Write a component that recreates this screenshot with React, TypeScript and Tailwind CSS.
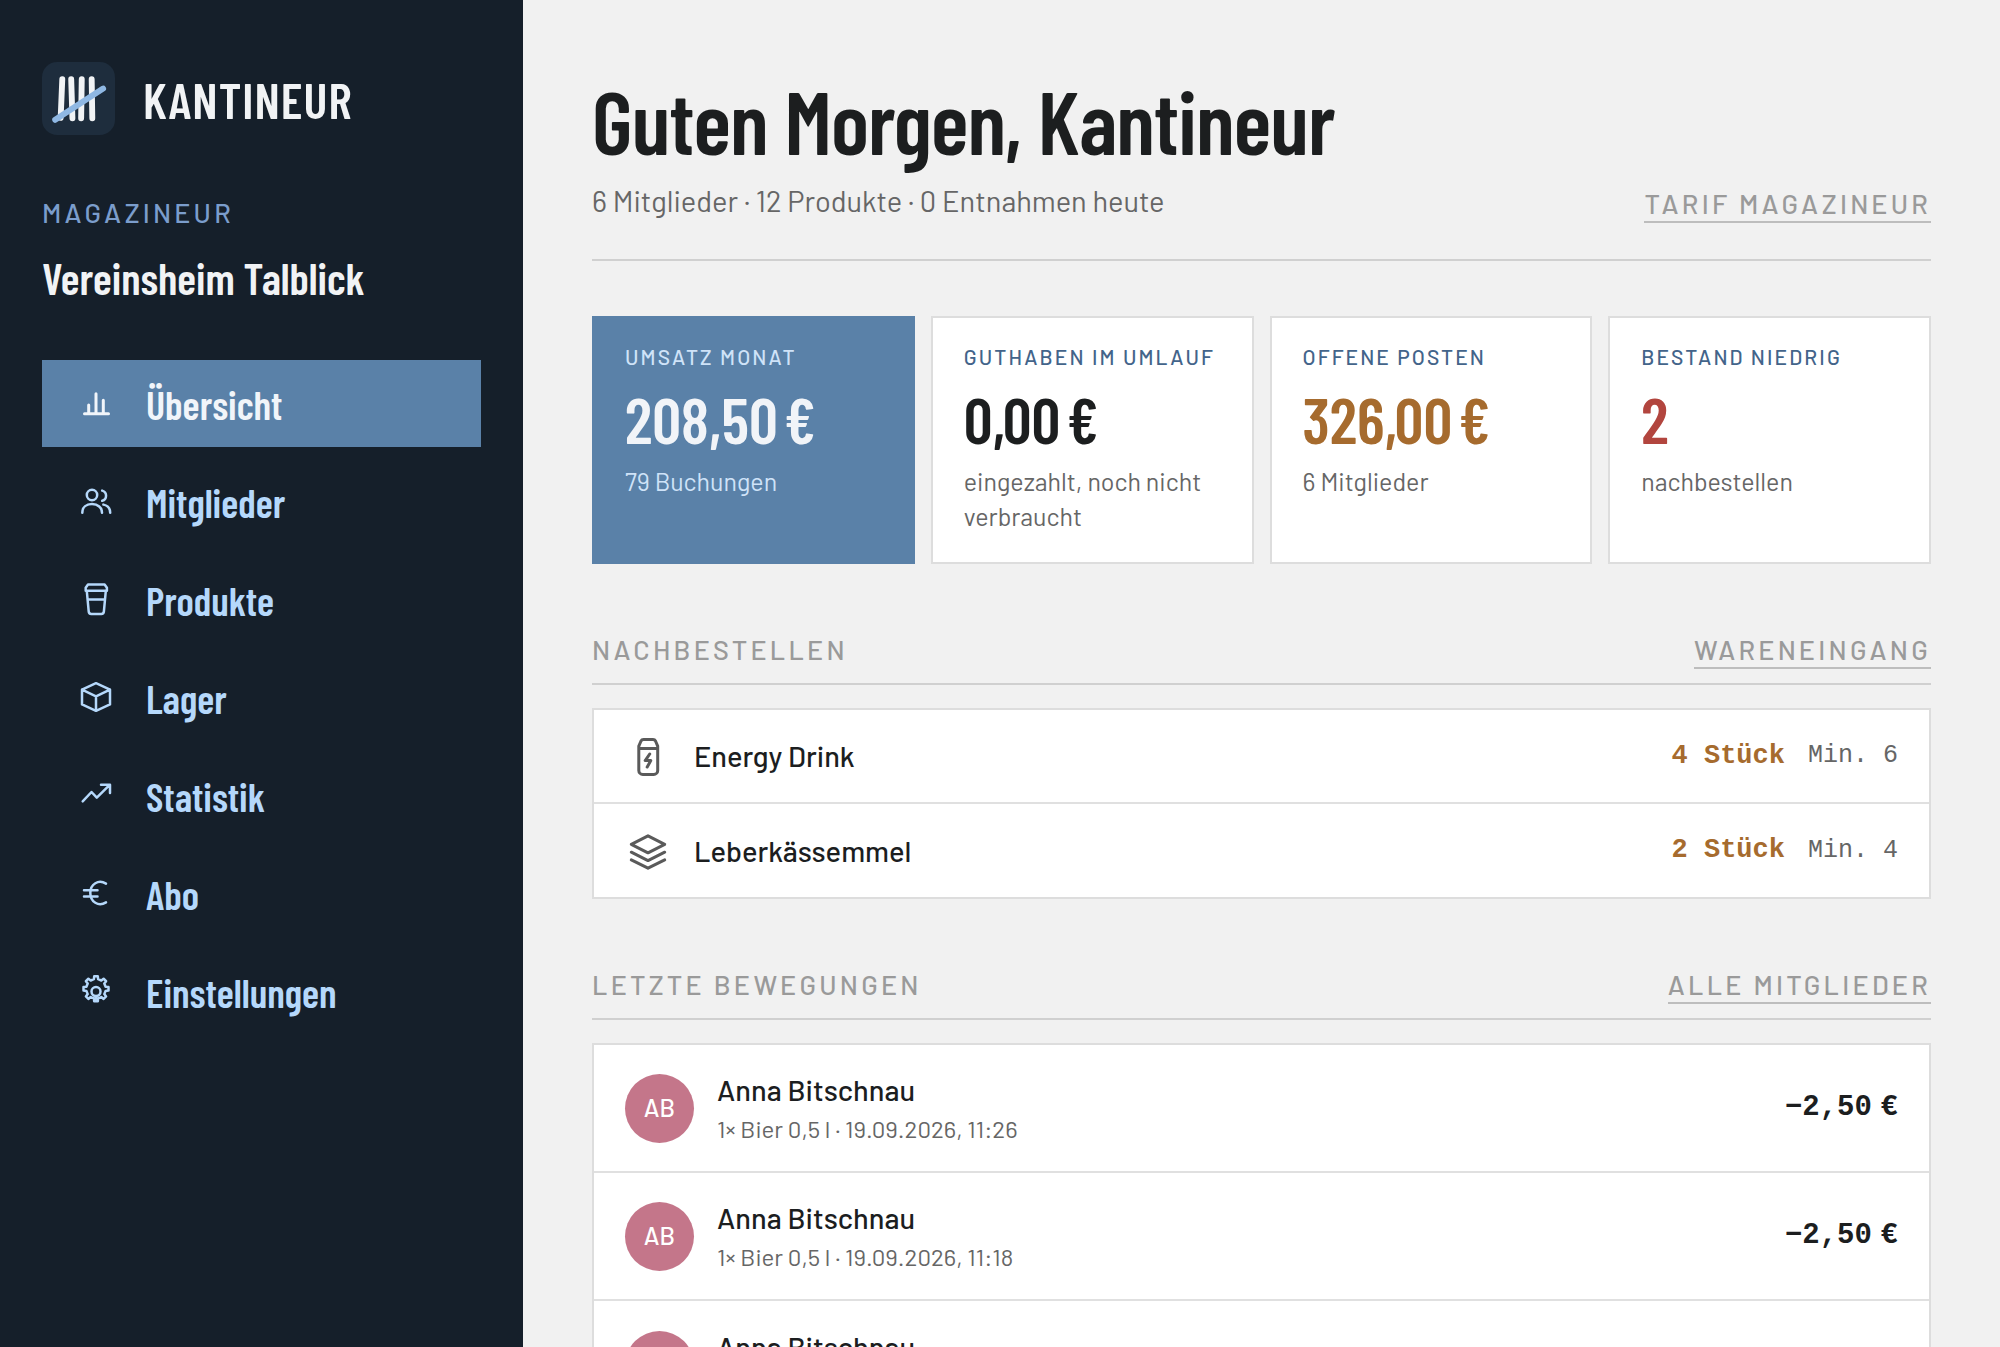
import React from 'react'
import clsx from 'clsx'

const condensed = "font-['Barlow_Condensed','Roboto_Condensed','Liberation_Sans_Narrow','Roboto',sans-serif]"
const sans = "font-['Barlow','Roboto',sans-serif]"
const mono = "font-['Liberation_Mono',monospace]"

// gear outline with eight teeth, centred on cx/cy
function gearPath(cx: number, cy: number, outer: number, inner: number) {
  const points: string[] = []
  for (let i = 0; i < 8; i++) {
    const mid = (i * Math.PI) / 4 - Math.PI / 2
    const corners = [
      [inner, -0.22],
      [outer, -0.14],
      [outer, 0.14],
      [inner, 0.22],
    ]
    corners.forEach(([r, a]) => {
      points.push(`${(cx + r * Math.cos(mid + a)).toFixed(1)} ${(cy + r * Math.sin(mid + a)).toFixed(1)}`)
    })
  }
  return `M${points.join('L')}Z`
}

const navItems = [
  {
    label: 'Übersicht',
    icon: <path d="M6.5 28.7h24M10.7 28.5v-8.5M18 28.5V8.7M25.3 28.5V15.2" strokeWidth="3" />,
  },
  {
    label: 'Mitglieder',
    icon: (
      <>
        <circle cx="14" cy="12" r="5.2" />
        <path d="M4.3 29.7c0-5.2 3.8-8.6 9.7-8.6s10 3.4 10 8.6M24.2 7.6a5.3 5.3 0 0 1 0 10.2M25.4 21.6c4.4.9 6.8 3.8 6.8 8.1" />
      </>
    ),
  },
  {
    label: 'Produkte',
    icon: <path d="M10 3.6h16.6l2.3 3.2v2.9H7.7V6.8zM8.8 10l1.9 20.4a2.6 2.6 0 0 0 2.6 2.5h10a2.6 2.6 0 0 0 2.6-2.5L27.8 10M9.8 18.4h17" />,
  },
  {
    label: 'Lager',
    icon: <path d="M18 4.2l14 6.4v14.8l-14 6.4-14-6.4V10.6zM4 10.6l14 6.8 14-6.8M18 17.4v14.4" />,
  },
  {
    label: 'Statistik',
    icon: <path d="M4.7 24.3l8.8-9.3 5.3 5.7L31.7 7.8M23 7.7h9v8.3" />,
  },
  {
    label: 'Abo',
    icon: <path d="M28 8.6C20.5 4 12.3 9 12.3 18S20.5 32 28 27.4M6 15.2h13.5M6 21.4h13.5" />,
  },
  {
    label: 'Einstellungen',
    icon: (
      <>
        <path d={gearPath(18, 15.8, 12.6, 9.8)} />
        <circle cx="18" cy="18.6" r="4.5" />
        <path d="M16.8 23.4l1.2 3.4 1.2-3.4" strokeWidth="1.8" />
      </>
    ),
  },
]

const stats = [
  { label: 'Umsatz Monat', value: '208,50\u202f€', note: '79 Buchungen', color: 'text-[#f1f4f8]', active: true },
  { label: 'Guthaben im Umlauf', value: '0,00\u202f€', note: 'eingezahlt, noch nicht verbraucht', color: 'text-[#1c1e1f]' },
  { label: 'Offene Posten', value: '326,00\u202f€', note: '6 Mitglieder', color: 'text-[#a66b2e]' },
  { label: 'Bestand niedrig', value: '2', note: 'nachbestellen', color: 'text-[#b2453e]' },
]

const reorders = [
  {
    name: 'Energy Drink',
    stock: '4 Stück',
    min: 'Min. 6',
    icon: (
      <>
        <path d="M18.5 6.5H28c1.2 0 2 .5 2.5 1.5l2.2 5.2v24.2a4 4 0 0 1-4 4H17.8a4 4 0 0 1-4-4V13.2L16 8c.5-1 1.3-1.5 2.5-1.5zM13.8 15.5h18.9" />
        <path d="M24.7 21l-4.5 6.6h5.6L22.2 34" />
      </>
    ),
  },
  {
    name: 'Leberkässemmel',
    stock: '2 Stück',
    min: 'Min. 4',
    icon: <path d="M23 7.8l16.7 8.5L23 24.8 6.3 16.3zM6.3 24.2L23 32.6l16.7-8.4M6.3 31.8L23 40.2l16.7-8.4" />,
  },
]

const movements = [
  { name: 'Anna Bitschnau', initials: 'AB', detail: '1× Bier 0,5 l · 19.09.2026, 11:26', amount: '−2,50\u202f€' },
  { name: 'Anna Bitschnau', initials: 'AB', detail: '1× Bier 0,5 l · 19.09.2026, 11:18', amount: '−2,50\u202f€' },
  { name: 'Anna Bitschnau', initials: 'AB', detail: '1× Bier 0,5 l · 19.09.2026, 11:12', amount: '−2,50\u202f€' },
]

function Logo() {
  return (
    <svg className="size-[73px] shrink-0" viewBox="0 0 72 72" fill="none" strokeLinecap="round" aria-hidden="true">
      <rect width="72" height="72" rx="15" fill="#1e2d3d" />
      <g stroke="#f1f3f5" strokeWidth="5.8">
        <path d="M20 17L18.4 55M28.8 17l1.2 38.5M39.200 17l-.6 38.500M49 17l.6 38.500" />
      </g>
      <path d="M13 57L60.300 26.200" stroke="#8fb8e4" strokeWidth="5.800" />
    </svg>
  )
}

function TextLink({ children }: { children: React.ReactNode }) {
  return (
    <a href="#" className="border-b-2 border-[#bdbdbd] pb-[2px] text-[27px] leading-[31px] font-medium tracking-[0.12em] text-[#9a9a9a] uppercase">
      {children}
    </a>
  )
}

function SectionHead({ title, link }: { title: string; link: string }) {
  return (
    <div className="mb-[23px] flex items-start justify-between border-b-2 border-[#d0d0d0] pb-[14px]">
      <h2 className="text-[27px] leading-[31px] font-medium tracking-[0.12em] text-[#9a9a9a] uppercase">{title}</h2>
      <TextLink>{link}</TextLink>
    </div>
  )
}

function Sidebar() {
  return (
    <aside className="w-[523px] shrink-0 bg-[#151f2a] px-[42px] pt-[62px]">
      <div className="flex items-center gap-7">
        <Logo />
        <span className={clsx(condensed, 'text-[50px] leading-[72px] font-semibold tracking-[1px] text-[#f1f3f5]')}>KANTINEUR</span>
      </div>
      <div className="mt-[61px] text-[27px] leading-8 font-medium tracking-[0.12em] text-[#7b9dcc] uppercase">Magazineur</div>
      <div className={clsx(condensed, 'mt-6 text-[44px] leading-[52px] font-semibold text-[#f1f3f5]')}>Vereinsheim Talblick</div>
      <nav className="mt-14 flex flex-col gap-[11px]">
        {navItems.map((item, i) => (
          <a
            key={item.label}
            href="#"
            aria-current={i === 0 ? 'page' : undefined}
            className={clsx(
              condensed,
              'flex h-[87px] items-center gap-8 px-9 text-[40px] font-semibold',
              i === 0 ? 'bg-[#5a81a8] text-[#f1f5fa]' : 'text-[#b5d8fb]'
            )}
          >
            <svg
              className="size-9 shrink-0"
              viewBox="0 1 36 36"
              fill="none"
              stroke="currentColor"
              strokeWidth="2.5"
              strokeLinecap="round"
              strokeLinejoin="round"
              aria-hidden="true"
            >
              {item.icon}
            </svg>
            {item.label}
          </a>
        ))}
      </nav>
    </aside>
  )
}

export default function App() {
  return (
    <div className={clsx(sans, 'flex h-screen overflow-hidden bg-[#f1f1f1] text-[#1c1e1f]')}>
      <Sidebar />
      <main className="min-w-0 flex-1 px-[69px] pt-[76px]">
        <header className="flex items-end justify-between border-b-2 border-[#d0d0d0] pb-9">
          <div>
            <h1 className={clsx(condensed, 'text-[88px] leading-[88px] font-semibold tracking-[-0.01em]')}>Guten Morgen, Kantineur</h1>
            <p className="mt-[15px] text-[29px] leading-[44px] text-[#666]">6 Mitglieder · 12 Produkte · 0 Entnahmen heute</p>
          </div>
          <TextLink>Tarif Magazineur</TextLink>
        </header>

        <div className="mt-[55px] grid grid-cols-4 gap-4">
          {stats.map((stat) => (
            <div
              key={stat.label}
              className={clsx('border-2 px-[31px] pt-[25px] pb-7', stat.active ? 'border-[#5a81a8] bg-[#5a81a8]' : 'border-[#dddddd] bg-white')}
            >
              <div className={clsx('text-[21px] leading-7 font-medium tracking-[0.1em] whitespace-nowrap uppercase', stat.active ? 'text-[#cfe3f8]' : 'text-[#43648a]')}>
                {stat.label}
              </div>
              <div className={clsx(condensed, 'mt-3 text-[64px] leading-[72px] font-semibold', stat.color)}>{stat.value}</div>
              <div className={clsx('mt-[9px] text-[25px] leading-[35px]', stat.active ? 'text-[#cfe3f8]' : 'text-[#666]')}>{stat.note}</div>
            </div>
          ))}
        </div>

        <section className="mt-[70px]">
          <SectionHead title="Nachbestellen" link="Wareneingang" />
          <ul className="divide-y-2 divide-[#e0e0e0] border-2 border-[#dddddd] bg-white">
            {reorders.map((item) => (
              <li key={item.name} className="flex h-[94px] items-center gap-[23px] px-[31px] last:h-[93px]">
                <svg
                  className="size-[46px] shrink-0 text-[#5a5a5a]"
                  viewBox="0 0 46 46"
                  fill="none"
                  stroke="currentColor"
                  strokeWidth="3"
                  strokeLinecap="round"
                  strokeLinejoin="round"
                  aria-hidden="true"
                >
                  {item.icon}
                </svg>
                <span className="flex-1 text-[29px] font-medium">{item.name}</span>
                <span className={clsx(mono, 'text-[27px] font-bold text-[#a66b2e]')}>{item.stock}</span>
                <span className={clsx(mono, 'text-[25px] text-[#666]')}>{item.min}</span>
              </li>
            ))}
          </ul>
        </section>

        <section className="mt-[70px]">
          <SectionHead title="Letzte Bewegungen" link="Alle Mitglieder" />
          <ul className="divide-y-2 divide-[#e0e0e0] border-2 border-[#dddddd] bg-white">
            {movements.map((move) => (
              <li key={move.detail} className="flex h-32 items-center gap-[23px] px-[31px]">
                <span className="flex size-[69px] shrink-0 items-center justify-center rounded-full bg-[#c4768a] text-[25px] font-medium text-white">
                  {move.initials}
                </span>
                <div className="flex-1 pt-1">
                  <div className="text-[29px] leading-[38px] font-medium">{move.name}</div>
                  <div className="text-[24px] leading-10 text-[#666]">{move.detail}</div>
                </div>
                <span className={clsx(mono, 'text-[29px] font-bold')}>{move.amount}</span>
              </li>
            ))}
          </ul>
        </section>
      </main>
    </div>
  )
}
